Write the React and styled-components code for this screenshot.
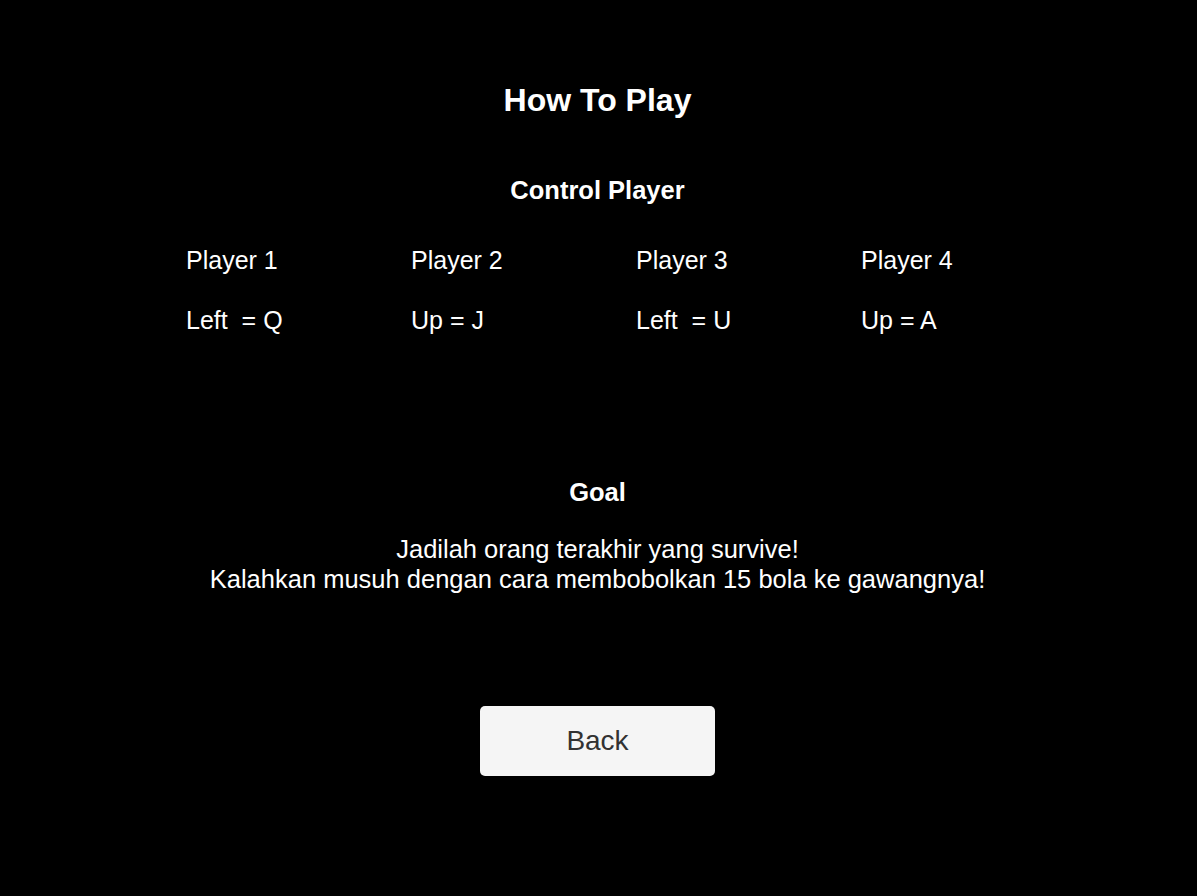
import React from 'react';
import styled, { createGlobalStyle } from 'styled-components';

const GlobalStyle = createGlobalStyle`
  html, body {
    margin: 0;
    padding: 0;
    background: #000;
  }
  body {
    font-family: 'Liberation Sans', Arial, sans-serif;
    color: #fff;
  }
`;

const players = [
  { name: 'Player 1', key: 'Left  = Q' },
  { name: 'Player 2', key: 'Up = J' },
  { name: 'Player 3', key: 'Left  = U' },
  { name: 'Player 4', key: 'Up = A' },
];

export default function App() {
  return (
    <>
      <GlobalStyle />
      <Page>
        <Title>How To Play</Title>
        <Heading top={55}>Control Player</Heading>
        <Controls>
          {players.map((p) => (
            <Player key={p.name}>
              <Label>{p.name}</Label>
              <Label>{p.key}</Label>
            </Player>
          ))}
        </Controls>
        <Heading top={142}>Goal</Heading>
        <Description>
          Jadilah orang terakhir yang survive!
          <br />
          Kalahkan musuh dengan cara membobolkan 15 bola ke gawangnya!
        </Description>
        <BackButton>Back</BackButton>
      </Page>
    </>
  );
}

const Page = styled.div`
  box-sizing: border-box;
  width: 100%;
  min-height: 896px;
  display: flex;
  flex-direction: column;
  align-items: center;
  padding: 80px 2px 0 0;
  background: #000;
`;

const Title = styled.h1`
  margin: 0;
  font-size: 32px;
  line-height: 40px;
  font-weight: bold;
`;

const Heading = styled.h2`
  margin: ${(props) => props.top}px 0 0;
  font-size: 25.5px;
  line-height: 30px;
  font-weight: bold;
`;

const Controls = styled.div`
  align-self: flex-start;
  margin: 40px 0 0 186px;
  display: grid;
  grid-template-columns: repeat(4, 225px);
`;

const Player = styled.div`
  display: flex;
  flex-direction: column;
  gap: 30px;
`;

const Label = styled.span`
  font-size: 25px;
  line-height: 30px;
  white-space: pre;
`;

const Description = styled.p`
  margin: 27px 0 0;
  font-size: 25.5px;
  line-height: 30px;
  text-align: center;
`;

const BackButton = styled.button`
  margin-top: 112px;
  width: 235px;
  height: 70px;
  border: none;
  border-radius: 5px;
  background: #f5f5f5;
  color: #323232;
  font-family: 'Liberation Sans', Arial, sans-serif;
  font-size: 28px;
  display: flex;
  align-items: center;
  justify-content: center;
  cursor: pointer;
`;
